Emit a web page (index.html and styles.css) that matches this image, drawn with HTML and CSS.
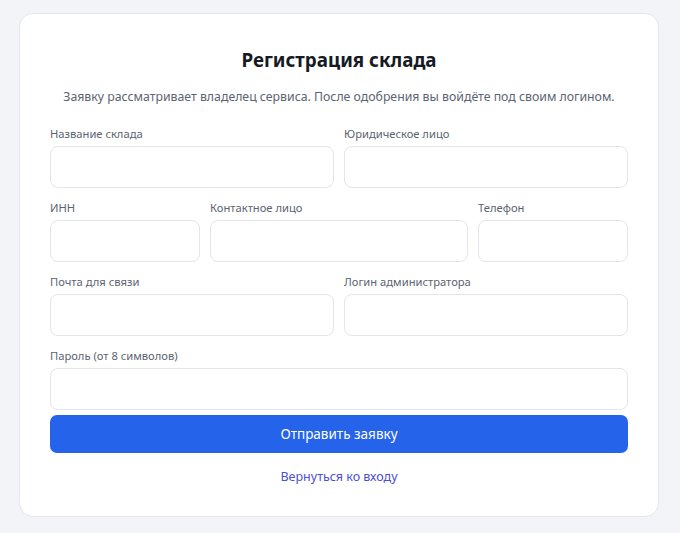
FILE: index.html
```html
<!DOCTYPE html>
<html lang="ru">
<head>
    <meta charset="UTF-8">
    <meta name="viewport" content="width=device-width, initial-scale=1.0">
    <title>Регистрация склада</title>
    <link rel="stylesheet" href="styles.css">
</head>
<body>
    <div class="card">
        <h1>Регистрация склада</h1>
        <p class="lead">Заявку рассматривает владелец сервиса. После одобрения вы войдёте под своим логином.</p>

        <form class="form" onsubmit="return false;">
            <div class="row row-2">
                <label class="field">
                    <span>Название склада</span>
                    <input type="text">
                </label>
                <label class="field">
                    <span>Юридическое лицо</span>
                    <input type="text">
                </label>
            </div>
            <div class="row row-3">
                <label class="field">
                    <span>ИНН</span>
                    <input type="text">
                </label>
                <label class="field">
                    <span>Контактное лицо</span>
                    <input type="text">
                </label>
                <label class="field">
                    <span>Телефон</span>
                    <input type="tel">
                </label>
            </div>
            <div class="row row-2">
                <label class="field">
                    <span>Почта для связи</span>
                    <input type="email">
                </label>
                <label class="field">
                    <span>Логин администратора</span>
                    <input type="text">
                </label>
            </div>
            <label class="field">
                <span>Пароль (от 8 символов)</span>
                <input type="password">
            </label>
            <button type="submit" class="submit">Отправить заявку</button>
        </form>

        <a href="#" class="back">Вернуться ко входу</a>
    </div>
</body>
</html>
```

FILE: styles.css
```css
body {
    font-family: "Noto Sans", "Open Sans", sans-serif;
    margin: 0;
    padding: 13px 21px 13px 19px;
    background: #f3f4f7;
    color: #111827;
}
.card {
    width: 578px;
    margin: 0 auto;
    padding: 32px 30px 30px;
    background: #fff;
    border: 1px solid #e4e6eb;
    border-radius: 14px;
    text-align: center;
}
h1 {
    margin: 0;
    font-size: 18.8px;
    line-height: 28px;
    font-weight: 700;
    color: #151a23;
}
.lead {
    margin: 13px 0 18px;
    font-size: 12.3px;
    line-height: 20px;
    color: #5b6472;
}
.form {
    display: flex;
    flex-direction: column;
    gap: 11px;
    text-align: left;
}
.row {
    display: grid;
    gap: 10px;
}
.row-2 {
    grid-template-columns: 1fr 1fr;
}
.row-3 {
    grid-template-columns: 150px 1fr 150px;
}
.field {
    display: flex;
    flex-direction: column;
    gap: 3px;
}
.field span {
    font-size: 11.2px;
    line-height: 18px;
    color: #5b6472;
}
.field input {
    height: 42px;
    box-sizing: border-box;
    border: 1px solid #e3e5ea;
    border-radius: 8px;
    background: #fff;
    font: inherit;
    padding: 0 10px;
}
.submit {
    height: 38px;
    margin-top: -6px;
    border: none;
    border-radius: 7px;
    background: #2563eb;
    color: #fff;
    font-family: inherit;
    font-size: 13.5px;
    cursor: pointer;
}
.back {
    display: block;
    margin-top: 15px;
    font-size: 12.5px;
    line-height: 18px;
    color: #4a4fd6;
    text-decoration: none;
}
```
